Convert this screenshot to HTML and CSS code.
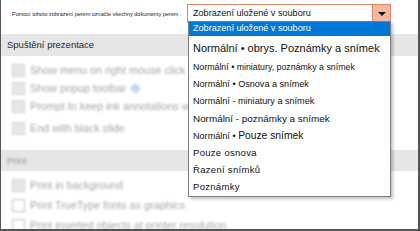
FILE: index.html
```html
<!DOCTYPE html>
<html lang="cs">
  <head>
    <meta charset="UTF-8" />
    <title>Možnosti prezentace</title>
    <link rel="stylesheet" href="styles.css">
  </head>
  <body>
    <div class="frame">
      <div class="top-row">
        <span class="hint">Pomocí tohoto zobrazení perem označte všechny dokumenty perem .</span>
        <div class="select">
          <span class="select-value">Zobrazení uložené v souboru</span>
          <span class="select-arrow"></span>
        </div>
      </div>

      <div class="section">
        <div class="band">Spuštění prezentace</div>
        <div class="options blurred">
          <div class="opt"><span class="box checked"></span>Show menu on right mouse click <span class="info"></span></div>
          <div class="opt"><span class="box checked"></span>Show popup toolbar <span class="info"></span></div>
          <div class="opt"><span class="box checked"></span>Prompt to keep ink annotations when exiting</div>
          <div class="opt gap"><span class="box checked"></span>End with black slide</div>
        </div>
      </div>

      <div class="section print">
        <div class="band"><span class="blurred">Print</span></div>
        <div class="options blurred">
          <div class="opt"><span class="box checked"></span>Print in background</div>
          <div class="opt"><span class="box"></span>Print TrueType fonts as graphics</div>
          <div class="opt"><span class="box"></span>Print inserted objects at printer resolution</div>
        </div>
      </div>

      <ul class="dropdown">
        <li class="item selected">Zobrazení uložené v souboru</li>
        <li class="item first">Normální • obrys. Poznámky a snímek</li>
        <li class="item s88">Normální • miniatury, poznámky a snímek</li>
        <li class="item s9">Normální • Osnova a snímek</li>
        <li class="item s9">Normální - miniatury a snímek</li>
        <li class="item s99">Normální - poznámky a snímek</li>
        <li class="item s9">Normální • <span class="big">Pouze snímek</span></li>
        <li class="item wide">Pouze osnova</li>
        <li class="item wide">Řazení snímků</li>
        <li class="item wide">Poznámky</li>
      </ul>
    </div>
  </body>
</html>
```

FILE: styles.css
```css
* {
  box-sizing: border-box;
  margin: 0;
  padding: 0;
}

body {
  width: 420px;
  height: 231px;
  overflow: hidden;
  background: #fff;
  font-family: "Liberation Sans", Arial, sans-serif;
  color: #1a1a1a;
}

.frame {
  position: relative;
  width: 420px;
  height: 231px;
  border-left: 1px solid #555;
  border-right: 2px solid #555;
  border-bottom: 2px solid #555;
  overflow: hidden;
}

.top-row {
  display: flex;
  align-items: center;
  height: 24px;
  padding: 3px 0 0 11px;
}

.hint {
  width: 175px;
  font-size: 5.5px;
  color: #222;
  white-space: nowrap;
}

.select {
  display: flex;
  align-items: stretch;
  width: 204px;
  height: 19px;
  border: 1px solid #e2866a;
  background: #fff;
}

.select-value {
  flex: 1;
  padding: 3px 0 0 5px;
  font-size: 9.1px;
  color: #111;
}

.select-arrow {
  width: 18px;
  background: #f6b99d;
  border-left: 1px solid #e2866a;
  position: relative;
}

.select-arrow::after {
  content: "";
  position: absolute;
  left: 5px;
  top: 7px;
  border-left: 4px solid transparent;
  border-right: 4px solid transparent;
  border-top: 4px solid #111;
}

.section {
  margin-top: 10px;
}

.band {
  height: 22px;
  background: #e6e6e6;
  padding: 5px 0 0 6px;
  font-size: 9.5px;
  color: #262626;
}

.print {
  margin-top: 13px;
}

.print .band {
  height: 21px;
}

.blurred {
  filter: blur(1.1px);
  opacity: 0.45;
}

.options {
  padding: 5px 0 0 11px;
  font-size: 10.8px;
  color: #333;
}

.opt {
  display: flex;
  align-items: center;
  gap: 5px;
  height: 18px;
  white-space: nowrap;
}

.opt.gap {
  margin-top: 4px;
}

.box {
  width: 13px;
  height: 13px;
  border: 1px solid #777;
  background: #fff;
}

.box.checked {
  background: #ccc;
  border-color: #999;
}

.info {
  display: inline-block;
  width: 9px;
  height: 9px;
  border-radius: 50%;
  background: #7aa7e0;
}

.print .options {
  padding-top: 4px;
}

.print .opt {
  height: 20px;
}

.dropdown {
  position: absolute;
  left: 187px;
  top: 21px;
  width: 203px;
  list-style: none;
  background: #fff;
  border: 1px solid #7d7d7d;
  box-shadow: 2px 2px 3px rgba(0, 0, 0, 0.25);
  padding-bottom: 1px;
}

.item {
  height: 17px;
  padding: 3px 0 0 4px;
  font-size: 9px;
  white-space: nowrap;
  color: #111;
}

.item.selected {
  height: 14px;
  padding-top: 1px;
  background: #0078d7;
  color: #fff;
  font-size: 9.1px;
}

.item.first {
  height: 23px;
  padding-top: 6px;
  font-size: 11px;
}

.s88 { font-size: 8.8px; }
.s9 { font-size: 9.1px; }
.s99 { font-size: 9.9px; }

.big {
  font-size: 10.3px;
}

.item.wide {
  font-size: 9.5px;
  letter-spacing: 0.3px;
}
```
